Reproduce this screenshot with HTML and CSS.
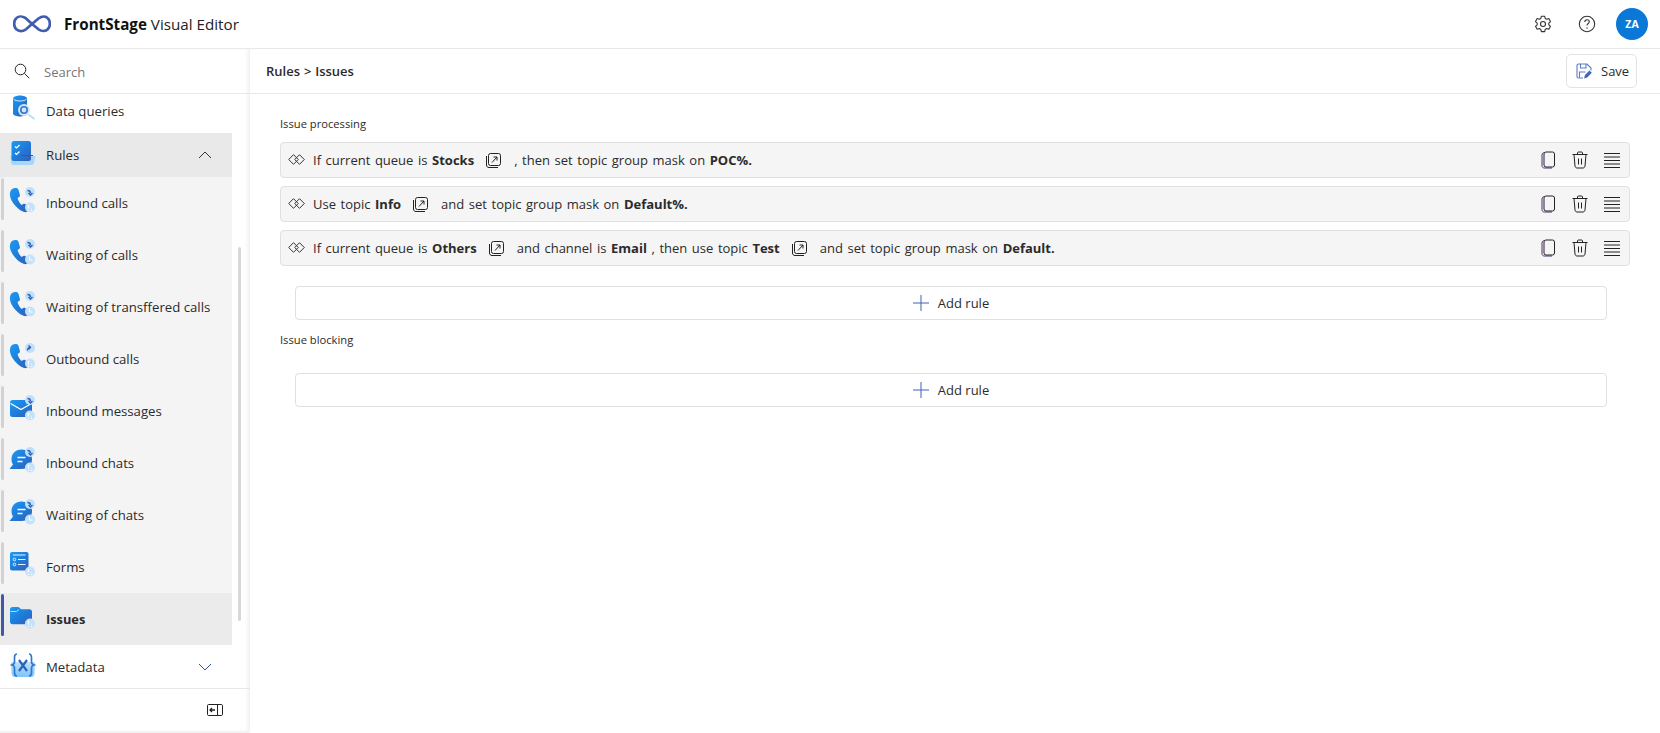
FILE: index.html
```html
<!DOCTYPE html>
<html lang="en">
<head>
<meta charset="utf-8">
<title>FrontStage Visual Editor</title>
<link rel="stylesheet" href="styles.css">
</head>
<body>
<svg class="defs" aria-hidden="true">
  <defs>
    <linearGradient id="g" x1="0" y1="0" x2="1" y2="1">
      <stop offset="0" stop-color="#1b9bf5"/><stop offset=".55" stop-color="#1f7ad8"/><stop offset="1" stop-color="#3a5cb0"/>
    </linearGradient>
    <linearGradient id="gl" x1="0" y1="0" x2="0" y2="1">
      <stop offset="0" stop-color="#bfe2fc"/><stop offset="1" stop-color="#7fc2f6"/>
    </linearGradient>
    <symbol id="phone" viewBox="0 0 26 26"><path fill="url(#g)" d="M4 1.500C1.500 2.500 .5 5.500 1 9 2 15 8.500 22.500 14.500 24.800c2.800 1 5.500-.3 5.800-3 .1-.9-.2-1.500-.9-2.100l-3-2.500c-.7-.6-1.500-.6-2.200-.1l-1.500 1C11 16.500 9 13.500 8.500 11l1.500-.9c.8-.5 1.100-1.300.9-2.100L9.500 3C9.100 1.500 7.500 .9 6 1.100z"/></symbol>
    <symbol id="b-in" viewBox="0 0 26 26"><circle cx="21" cy="5" r="5" fill="#bfe0fb"/><path d="M18.500 3.500c2 0 3 .8 3 2.800M19.500 6l2 2 2-2" fill="none" stroke="#2f5fae" stroke-width="1.300"/></symbol>
    <symbol id="b-out" viewBox="0 0 26 26"><circle cx="21" cy="5" r="5" fill="#bfe0fb"/><path d="M18.500 7.500c0-2 1-3 3-3.300M19.500 2.500l2 1.800-1.800 2" fill="none" stroke="#2f5fae" stroke-width="1.300"/></symbol>
    <symbol id="b-warn" viewBox="0 0 26 26"><circle cx="21" cy="20.500" r="5" fill="#c4e2fb"/><path d="M19.500 18v3.500M19.500 23v1M22.500 21v.5M22.500 23v1" stroke="#fff" stroke-width="1.300"/></symbol>
    <symbol id="b-clock" viewBox="0 0 26 26"><circle cx="21" cy="20.500" r="5" fill="#c4e2fb"/><path d="M20.500 17.500v3.500h3" fill="none" stroke="#fff" stroke-width="1"/></symbol>
    <symbol id="mail" viewBox="0 0 26 26"><rect x="1" y="5" width="22" height="17" rx="2.500" fill="url(#g)"/><path d="M1.500 8.500l10.500 6 10.500-6" fill="none" stroke="#fff" stroke-width="1.300"/></symbol>
    <symbol id="chat" viewBox="0 0 26 26"><path fill="url(#g)" d="M12.500 2.500C6 2.500 2.500 7 2.500 12c0 2.800 .8 4.500 1.500 5.500L.5 22h12c6.500 0 10.500-4.300 10.500-9.800S19 2.500 12.500 2.500z"/><path d="M8.500 10.500h8M8.500 14.500h5" stroke="#fff" stroke-width="1.400"/></symbol>
    <symbol id="diam" viewBox="0 0 17 11"><path d="M5.500 .7L.7 5.500l4.800 4.800 4.800-4.800zM11.500 .7L6.700 5.500l4.800 4.800 4.800-4.800z" fill="none" stroke="#333" stroke-width="1" stroke-linejoin="round"/></symbol>
    <symbol id="lnk" viewBox="0 0 15 15"><g fill="none" stroke="#222" stroke-width="1"><rect x="2.500" y=".5" width="12" height="12" rx="2"/><path d="M.5 3v9c0 1.500 1 2.500 2.500 2.500h9"/><path d="M6 9.500L11 4M7.500 4H11v3.500"/></g></symbol>
    <symbol id="copy" viewBox="0 0 16 18"><g fill="none" stroke="#222" stroke-width="1"><rect x="4" y="1" width="10.500" height="15" rx="2"/><path d="M4.500 1.500C2.500 2 2 2.500 2 4v10.500C2 16 3 17 4.500 17H12" stroke="#4a2c6e"/></g></symbol>
    <symbol id="trash" viewBox="0 0 16 18"><path fill="none" stroke="#222" stroke-width="1" d="M.5 3.500h15M5.500 3.500V2c0-.7.4-1 1-1h3c.6 0 1 .3 1 1v1.500M2 3.500l1 11.500c.1 1.200 1 2 2 2h6c1 0 1.900-.8 2-2l1-11.500M6.500 7.500v6M9.500 7.500v6"/></symbol>
    <symbol id="lines" viewBox="0 0 16 18"><path stroke="#222" stroke-width="1" d="M0 2.500h16M0 6h16M0 9.500h16M0 13h16M0 16.500h16"/></symbol>
    <symbol id="plus" viewBox="0 0 16 16"><path stroke="#3f62b5" stroke-width="1" d="M0 8h16M8 0v16"/></symbol>
  </defs>
</svg>

<header class="top">
  <div class="brand">
    <svg class="logo" viewBox="0 0 38 18"><path d="M19 9L12.500 3C9 .8 5 1 3 3.500.6 6 .6 11.500 3 14c2.500 2.300 6.500 2.600 10 .3L19 9l6.500-5.500C29 1 33 1 35 3.500c2.500 2.500 2.500 8 0 10.500-2.200 2.300-6 2.600-9.500 .3z" fill="none" stroke="#3f5cae" stroke-width="2.700" stroke-linejoin="round"/></svg>
    <div class="title"><b>FrontStage</b> Visual Editor</div>
  </div>
  <div class="top-actions">
    <svg class="ico18 gear" viewBox="0 0 18 18" fill="none" stroke="#333" stroke-width="1.100"><path d="M7.300 1.300h3.400l.5 2.200 1.400.8 2.200-.7 1.700 3-1.700 1.500v1.700l1.700 1.500-1.700 3-2.200-.7-1.400.8-.5 2.200H7.300l-.5-2.200-1.400-.8-2.200.7-1.700-3 1.700-1.500V8.100L1.500 6.600l1.700-3 2.200.7 1.400-.8z" stroke-linejoin="round"/><circle cx="9" cy="9" r="2.500"/></svg>
    <svg class="ico18 help" viewBox="0 0 18 18" fill="none" stroke="#333" stroke-width="1.100"><circle cx="9" cy="9" r="7.700"/><path d="M6.800 7c0-1.400 1-2.300 2.300-2.300 1.200 0 2.200.8 2.200 2 0 1.800-2.300 1.800-2.300 3.800"/><circle cx="9" cy="13" r=".7" fill="#333" stroke="none"/></svg>
    <div class="avatar">ZA</div>
  </div>
</header>

<div class="shell">
  <aside class="side">
    <div class="search">
      <svg class="ico16" viewBox="0 0 16 16" fill="none" stroke="#222" stroke-width="1"><circle cx="6.500" cy="6.500" r="5.300"/><path d="M10.400 10.400l4.800 4.800"/></svg>
      <span class="search-text">Search</span>
    </div>
    <nav class="nav">
      <div class="nav-inner">
        <div class="group">
          <svg class="gi" viewBox="0 0 26 26"><path fill="url(#g)" d="M3 3.500C3 1.500 7 .5 10 .5s7 1 7 3v15c0 2-4 3-7 3s-7-1-7-3z"/><path d="M3.500 4c1 1.500 4 2 6.500 2s5.500-.5 6.500-2" fill="none" stroke="#d4ecfd" stroke-width="1"/><circle cx="14" cy="15" r="6" fill="#cfe6fb"/><circle cx="14" cy="15" r="3.200" fill="none" stroke="#3a74c8" stroke-width="1.600"/><path d="M18.500 19.500l6 4.500" stroke="#bcdcf8" stroke-width="2"/></svg>
          <span>Data queries</span>
        </div>
        <div class="group open">
          <svg class="gi" viewBox="0 0 26 26"><path d="M.5 15h25l-1.500 7c-.3 1.200-1 2-2.500 2h-18c-1.500 0-2.200-.8-2.500-2z" fill="#a8d6fa"/><rect x="1.500" y="0" width="19.500" height="20" rx="2.500" fill="url(#g)"/><path d="M5 5.500l1.500 1.500L9.500 4M5 12l1.500 1.500 3-3" fill="none" stroke="#fff" stroke-width="1.200"/><path d="M11 14.500h12" stroke="#1e5fb5" stroke-width="1"/></svg>
          <span>Rules</span>
          <svg class="chev" viewBox="0 0 14 8" fill="none" stroke="#333" stroke-width="1"><path d="M1 7l6-6 6 6"/></svg>
        </div>
        <ul class="subs">
          <li class="sub"><svg class="si" viewBox="0 0 26 26"><use href="#phone"/><use href="#b-in"/><use href="#b-warn"/></svg><span>Inbound calls</span></li>
          <li class="sub"><svg class="si" viewBox="0 0 26 26"><use href="#phone"/><use href="#b-in"/><use href="#b-clock"/></svg><span>Waiting of calls</span></li>
          <li class="sub"><svg class="si" viewBox="0 0 26 26"><use href="#phone"/><use href="#b-in"/><use href="#b-clock"/></svg><span>Waiting of transffered calls</span></li>
          <li class="sub"><svg class="si" viewBox="0 0 26 26"><use href="#phone"/><use href="#b-out"/><use href="#b-warn"/></svg><span>Outbound calls</span></li>
          <li class="sub"><svg class="si" viewBox="0 0 26 26"><use href="#mail"/><use href="#b-in"/><use href="#b-warn"/></svg><span>Inbound messages</span></li>
          <li class="sub"><svg class="si" viewBox="0 0 26 26"><use href="#chat"/><use href="#b-in"/><use href="#b-warn"/></svg><span>Inbound chats</span></li>
          <li class="sub"><svg class="si" viewBox="0 0 26 26"><use href="#chat"/><use href="#b-in"/><use href="#b-clock"/></svg><span>Waiting of chats</span></li>
          <li class="sub"><svg class="si" viewBox="0 0 26 26"><rect x="1" y="1" width="18.500" height="18.500" rx="2" fill="url(#g)"/><path d="M4 4h12.500M9 8.500h7.500M9 13.500h7.500" stroke="#e6f3fe" stroke-width="1"/><circle cx="5.500" cy="8.500" r="1.300" fill="none" stroke="#e6f3fe"/><circle cx="5.500" cy="13.500" r="1.300" fill="none" stroke="#e6f3fe"/><use href="#b-warn"/></svg><span>Forms</span></li>
          <li class="sub active"><svg class="si" viewBox="0 0 26 26"><path fill="url(#g)" d="M1 6.500C1 5 2 4 3.500 4h5.300c.8 0 1.400.3 2 1l1.200 1.300h8.500c1.500 0 2.500 1 2.500 2.500v10c0 1.500-1 2.500-2.500 2.500h-17C2 21.300 1 20.300 1 18.800z"/><path d="M1.500 8.500h6l2.500-2" fill="none" stroke="#d4ecfd" stroke-width=".8"/><use href="#b-warn"/></svg><span>Issues</span></li>
        </ul>
        <div class="group meta">
          <svg class="gi" viewBox="0 0 26 26"><path d="M1 9h24l-.5 11c-.1 2.500-1.500 4-3.500 4H5c-2 0-3.400-1.500-3.500-4z" fill="url(#gl)"/><path d="M7 1C4.500 1 4.500 3 4.500 5v4c0 2-1 2.500-2.500 3 1.500.5 2.500 1 2.500 3v4c0 2 0 4 2.500 4M19 1c2.500 0 2.500 2 2.500 4v4c0 2 1 2.500 2.500 3-1.500.5-2.500 1-2.500 3v4c0 2 0 4-2.500 4" fill="none" stroke="#2f78d0" stroke-width="1.700"/><path d="M9 7l8 11M17 7L9 18" stroke="#2a62b8" stroke-width="2.200"/></svg>
          <span>Metadata</span>
          <svg class="chev" viewBox="0 0 14 8" fill="none" stroke="#33558f" stroke-width="1"><path d="M1 1l6 6 6-6"/></svg>
        </div>
      </div>
      <div class="scroll-thumb"></div>
    </nav>
    <div class="side-foot">
      <svg class="collapse" viewBox="0 0 16 12" fill="none" stroke="#222" stroke-width="1"><rect x=".5" y=".5" width="15" height="11" rx="1.200"/><path d="M10.500 .5v11"/><path d="M3 6h5M5 4l-2 2 2 2" stroke-width="1.300"/></svg>
    </div>
  </aside>

  <main class="main">
    <div class="bar">
      <div class="crumbs">Rules &gt; Issues</div>
      <button class="save">
        <svg class="ico16" viewBox="0 0 16 16" fill="none" stroke="#5a7cc4" stroke-width="1.100"><path d="M7 15H2.500C1.500 15 1 14.500 1 13.500v-11C1 1.500 1.500 1 2.500 1H11l4 4v2.500"/><path d="M4.500 1v4h5.500V1M3.500 14.500V9h6"/><path d="M8 15.500l1-3.500 4.500-4.500 2.300 2.300L11.300 14.500z" fill="#3f66bf" stroke="none"/></svg>
        <span>Save</span>
      </button>
    </div>
    <section class="content">
      <h2 class="label">Issue processing</h2>
      <div class="rules">
        <div class="rule">
          <svg class="diam"><use href="#diam"/></svg>
          <div class="rule-text">If current queue is <b>Stocks</b> <svg class="link"><use href="#lnk"/></svg> , then set topic group mask on <b>POC%.</b></div>
          <div class="rule-actions">
            <svg class="act"><use href="#copy"/></svg>
            <svg class="act"><use href="#trash"/></svg>
            <svg class="act"><use href="#lines"/></svg>
          </div>
        </div>
        <div class="rule">
          <svg class="diam"><use href="#diam"/></svg>
          <div class="rule-text">Use topic <b>Info</b> <svg class="link"><use href="#lnk"/></svg> and set topic group mask on <b>Default%.</b></div>
          <div class="rule-actions">
            <svg class="act"><use href="#copy"/></svg>
            <svg class="act"><use href="#trash"/></svg>
            <svg class="act"><use href="#lines"/></svg>
          </div>
        </div>
        <div class="rule">
          <svg class="diam"><use href="#diam"/></svg>
          <div class="rule-text">If current queue is <b>Others</b> <svg class="link"><use href="#lnk"/></svg> and channel is <b>Email</b> , then use topic <b>Test</b> <svg class="link"><use href="#lnk"/></svg> and set topic group mask on <b>Default.</b></div>
          <div class="rule-actions">
            <svg class="act"><use href="#copy"/></svg>
            <svg class="act"><use href="#trash"/></svg>
            <svg class="act"><use href="#lines"/></svg>
          </div>
        </div>
      </div>
      <button class="add add-first"><svg class="plus"><use href="#plus"/></svg><span>Add rule</span></button>
      <h2 class="label label-second">Issue blocking</h2>
      <button class="add add-second"><svg class="plus"><use href="#plus"/></svg><span>Add rule</span></button>
    </section>
  </main>
</div>
</body>
</html>
```

FILE: styles.css
```css
* { box-sizing: border-box; }
html, body { margin: 0; height: 733px; overflow: hidden; background: #fff; }
body { font-family: "Open Sans", "Noto Sans", sans-serif; font-size: 13px; color: #2b2b2b; }
.defs { position: absolute; width: 0; height: 0; }
svg { display: block; flex: none; }

.top { height: 49px; border-bottom: 1px solid #e8e8e8; display: flex; align-items: center; justify-content: space-between; }
.brand { display: flex; align-items: center; padding-left: 13px; }
.logo { width: 38px; height: 18px; }
.title { margin-left: 13px; font-size: 15.200px; color: #222; }
.title b { font-weight: 700; color: #111; }
.top-actions { display: flex; align-items: center; padding-right: 12px; }
.ico18 { width: 18px; height: 18px; }
.gear { margin-right: 26px; }
.help { margin-right: 20px; }
.avatar { width: 32px; height: 32px; border-radius: 50%; background: #0a78d6; color: #fff; font-size: 10.500px; font-weight: 700; display: flex; align-items: center; justify-content: center; }

.shell { display: flex; height: 684px; }
.side { width: 250px; flex: none; display: flex; flex-direction: column; box-shadow: inset -4px 0 4px -2px rgba(0,0,0,.07); border-bottom: 2px solid #f3f3f3; }
.search { height: 45px; flex: none; border-bottom: 1px solid #e8e8e8; display: flex; align-items: center; padding-left: 14px; }
.ico16 { width: 16px; height: 16px; }
.search-text { margin: 1px 0 0 14px; color: #767676; }
.nav { flex: 1; position: relative; overflow: hidden; font-size: 13.200px; }
.nav-inner { width: 232px; margin-top: -5px; }
.group { height: 44px; display: flex; align-items: center; padding-left: 10px; position: relative; }
.group.open { background: #e9e9e9; }
.gi { width: 26px; height: 26px; margin-right: 10px; margin-bottom: 6px; }
.group.open .gi, .group.meta .gi { margin-bottom: 2px; }
.sub span { margin-bottom: 1px; }
.chev { width: 14px; height: 8px; position: absolute; right: 20px; top: 18px; }
.subs { list-style: none; margin: 0; padding: 0; background: #f4f4f4; }
.sub { height: 52px; display: flex; align-items: center; padding-left: 9px; position: relative; }
.sub::before { content: ""; position: absolute; left: 1px; top: 1px; width: 3px; height: 42px; background: #d2d2d2; border-radius: 2px; }
.si { width: 26px; height: 26px; margin-right: 11px; margin-bottom: 6px; }
.sub.active { background: #ebebeb; font-weight: 700; font-size: 12.800px; }
.sub.active::before { background: #3f58a8; }
.scroll-thumb { position: absolute; right: 9px; top: 153px; width: 3px; height: 374px; background: #d8d8d8; border-radius: 2px; }
.side-foot { height: 43px; flex: none; border-top: 1px solid #e8e8e8; display: flex; justify-content: flex-end; align-items: center; padding-right: 27px; }
.collapse { width: 16px; height: 12px; }

.main { flex: 1; min-width: 0; }
.bar { height: 45px; border-bottom: 1px solid #e8e8e8; display: flex; align-items: center; justify-content: space-between; padding: 0 23px 0 16px; }
.crumbs { font-size: 13px; font-weight: 600; color: #2b2b2b; word-spacing: .5px; }
.save { height: 34px; width: 71px; border: 1px solid #e3e3e3; border-radius: 5px; background: #fff; display: flex; align-items: center; gap: 9px; padding: 0 0 0 9px; font: inherit; color: #2b2b2b; }
.content { padding: 22px 30px 0 30px; }
.label { margin: 0; font-size: 11.200px; font-weight: 400; line-height: 16px; color: #2b2b2b; }
.rules { display: flex; flex-direction: column; gap: 8px; margin-top: 10px; }
.rule { height: 36px; background: #f5f5f5; border: 1px solid #e0e0e0; border-radius: 4px; display: flex; align-items: center; padding: 0 9px 0 7px; }
.diam { width: 17px; height: 11px; margin-right: 8px; margin-top: -2px; }
.rule-text { flex: 1; display: flex; align-items: center; white-space: pre; word-spacing: 1.200px; }
.rule-text b { font-weight: 700; }
.link { width: 15px; height: 15px; margin: 0 8.500px 0 12px; }
.rule-actions { display: flex; gap: 16px; }
.act { width: 16px; height: 18px; }
.add { display: flex; align-items: center; justify-content: center; gap: 9px; width: 1312px; height: 34px; margin-left: 15px; background: #fff; border: 1px solid #e0e0e0; border-radius: 4px; font: inherit; color: #2b2b2b; }
.add-first { margin-top: 20px; }
.label-second { margin-top: 12px; }
.add-second { margin-top: 25px; }
.plus { width: 16px; height: 16px; }
```
